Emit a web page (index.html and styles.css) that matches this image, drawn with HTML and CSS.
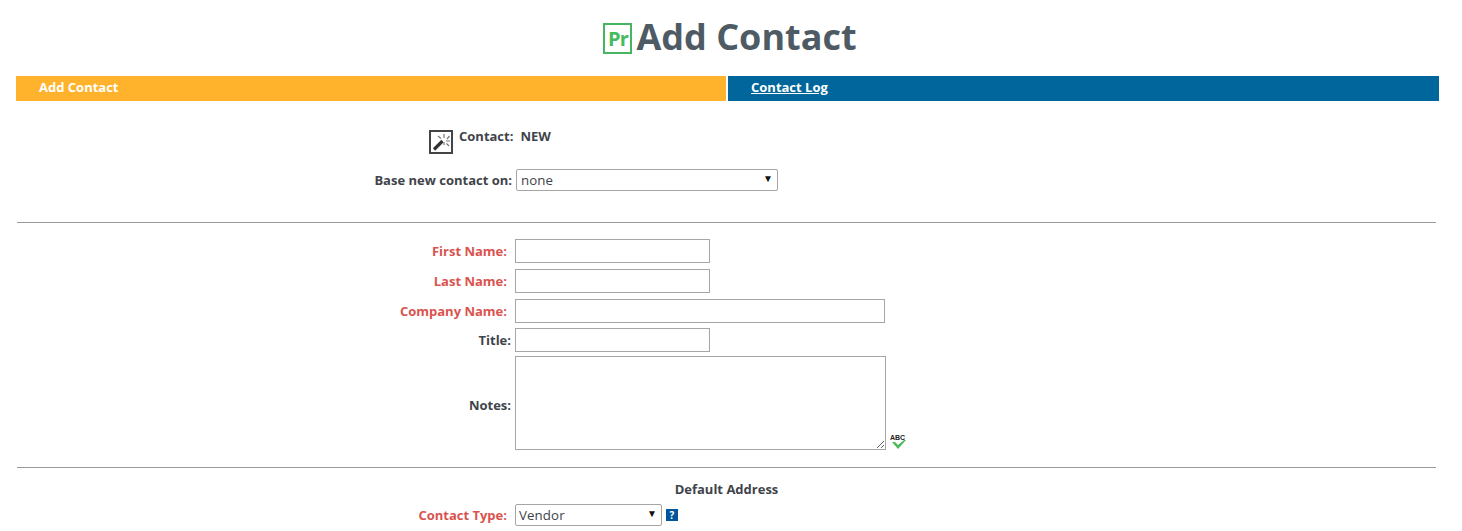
FILE: index.html
```html
<!DOCTYPE HTML>
<html>
<head>
<meta charset="utf-8">
<title>Add Contact</title>
<link rel="stylesheet" href="styles.css">
</head>
<body>
<h1 class="page-title">
  <span class="logo">Pr</span>Add Contact
</h1>

<div class="tabs">
  <div class="tab tab-active">Add Contact</div>
  <div class="tab tab-link"><a href="#">Contact Log</a></div>
</div>

<div class="top-section">
  <div class="contact-line">
    <svg class="wand" width="24" height="24" viewBox="0 0 24 24">
      <rect x="1" y="1" width="22" height="22" fill="#fff" stroke="#444" stroke-width="2"/>
      <path d="M5 19.500l8.500-8.500" stroke="#333" stroke-width="3.200" fill="none"/>
      <path d="M15 4v4M15 12v3M9 6l3 2.500M18 9l2.500-3M17 11h4M17.500 13.500l2.500 2.500" stroke="#777" stroke-width="1.200" fill="none"/>
    </svg>
    <span class="contact-text">Contact:</span>
    <span class="contact-text">NEW</span>
  </div>
  <div class="row row-base">
    <label class="label">Base new contact on:</label>
    <div class="fake-select select-base">none<span class="arrow">▼</span></div>
  </div>
</div>

<hr class="divider">

<div class="fields">
  <div class="row row-first">
    <label class="label required">First Name:</label>
    <input class="input input-short" type="text">
  </div>
  <div class="row row-last">
    <label class="label required">Last Name:</label>
    <input class="input input-short" type="text">
  </div>
  <div class="row row-company">
    <label class="label required">Company Name:</label>
    <input class="input input-long" type="text">
  </div>
  <div class="row row-title">
    <label class="label">Title:</label>
    <input class="input input-short" type="text">
  </div>
  <div class="row row-notes">
    <label class="label label-notes">Notes:</label>
    <textarea class="notes"></textarea>
    <span class="spell">
      <span class="spell-text">ABC</span>
      <svg class="spell-check" width="14" height="10" viewBox="0 0 14 10">
        <path d="M0 3h3l3 3 6-5h2l-8 9z" fill="#4cb85c"/>
      </svg>
    </span>
  </div>
</div>

<hr class="divider">

<div class="address-title">Default Address</div>
<div class="row row-type">
  <label class="label required">Contact Type:</label>
  <div class="fake-select select-type">Vendor<span class="arrow">▼</span></div>
  <span class="help">?</span>
</div>
</body>
</html>
```

FILE: styles.css
```css
html, body {
  height: 531px;
  overflow: hidden;
}
body {
  margin: 0;
  padding: 0 16px;
  background: white;
  color: #3f444b;
  font-family: "Open Sans", sans-serif;
  font-size: 13px;
}

.page-title {
  display: flex;
  justify-content: center;
  align-items: center;
  margin: 0;
  padding-right: 2px;
  padding-bottom: 4px;
  height: 76px;
  box-sizing: border-box;
  font-size: 36px;
  line-height: 49px;
  font-weight: 700;
  color: #4e5b64;
}
.logo {
  display: block;
  box-sizing: border-box;
  width: 29px;
  height: 31px;
  margin-top: 4px;
  margin-right: 4px;
  border: 2px solid #48b461;
  color: #45bb5c;
  font-size: 20px;
  line-height: 27px;
  text-align: center;
  letter-spacing: -1px;
}

.tabs {
  display: flex;
  width: 1423px;
  height: 25px;
  gap: 2px;
  font-weight: 700;
  line-height: 23px;
  color: white;
}
.tab {
  box-sizing: border-box;
  padding-left: 23px;
}
.tab-active {
  width: 710px;
  background: #ffb32c;
}
.tab-link {
  flex: 1;
  background: #00669b;
}
.tab-link a {
  color: white;
}

.top-section {
  height: 121px;
}
.contact-line {
  display: flex;
  align-items: flex-start;
  padding-left: 413px;
  padding-top: 28px;
  height: 68px;
  box-sizing: border-box;
  font-weight: 700;
}
.wand {
  margin-top: 1px;
  margin-right: 6px;
}
.contact-text {
  margin-top: -2px;
  margin-right: 7px;
  line-height: 18px;
}

.row {
  display: flex;
  align-items: center;
}
.label {
  box-sizing: border-box;
  width: 495px;
  text-align: right;
  font-weight: 700;
}
.required {
  width: 491px;
  margin-right: 8px;
  color: #d9534f;
}
.label:not(.required) {
  margin-right: 4px;
}
.label-notes {
  padding-top: 4px;
}

.row-base .label {
  width: 496px;
}
.row-base {
  height: 22px;
}
.fake-select {
  display: flex;
  justify-content: space-between;
  box-sizing: border-box;
  height: 22px;
  padding: 0 4px;
  border: 1px solid #a6a6a6;
  border-radius: 2px;
  background: white;
  font-size: 13.3px;
  letter-spacing: 0.1px;
  line-height: 20px;
  color: #3f444b;
}
.arrow {
  font-size: 10px;
  color: #111;
  line-height: 17px;
}
.select-base {
  width: 262px;
}
.select-type {
  width: 147px;
  padding-left: 3px;
}

.divider {
  width: 1419px;
  margin: 0 0 0 1px;
  height: 1px;
  border: 0;
  background: #999;
}

.fields {
  padding-top: 16px;
  height: 244px;
  box-sizing: border-box;
}
.input, .notes {
  box-sizing: border-box;
  margin: 0;
  border: 1px solid #a6a6a6;
  background: white;
  font-family: "Open Sans", sans-serif;
  font-size: 13px;
}
.input {
  height: 24px;
}
.input-short {
  width: 195px;
}
.input-long {
  width: 370px;
}
.row-first, .row-last {
  margin-bottom: 6px;
}
.row-company {
  margin-bottom: 5px;
}
.row-title {
  margin-bottom: 4px;
}
.notes {
  display: block;
  width: 371px;
  height: 94px;
  resize: both;
}
.spell {
  align-self: flex-end;
  display: block;
  position: relative;
  width: 20px;
  height: 16px;
  margin-left: 4px;
}
.spell-text {
  display: block;
  font-family: "Liberation Sans", sans-serif;
  font-size: 7px;
  font-weight: 700;
  line-height: 8px;
  color: #222;
}
.spell-check {
  position: absolute;
  left: 2px;
  top: 5px;
}

.address-title {
  width: 1421px;
  padding-top: 12px;
  height: 36px;
  box-sizing: border-box;
  text-align: center;
  font-weight: 700;
  line-height: 18px;
}
.help {
  display: block;
  width: 12px;
  height: 12px;
  margin-left: 4px;
  background: #00559b;
  color: white;
  font-size: 10px;
  font-weight: 700;
  line-height: 12px;
  text-align: center;
}
```
